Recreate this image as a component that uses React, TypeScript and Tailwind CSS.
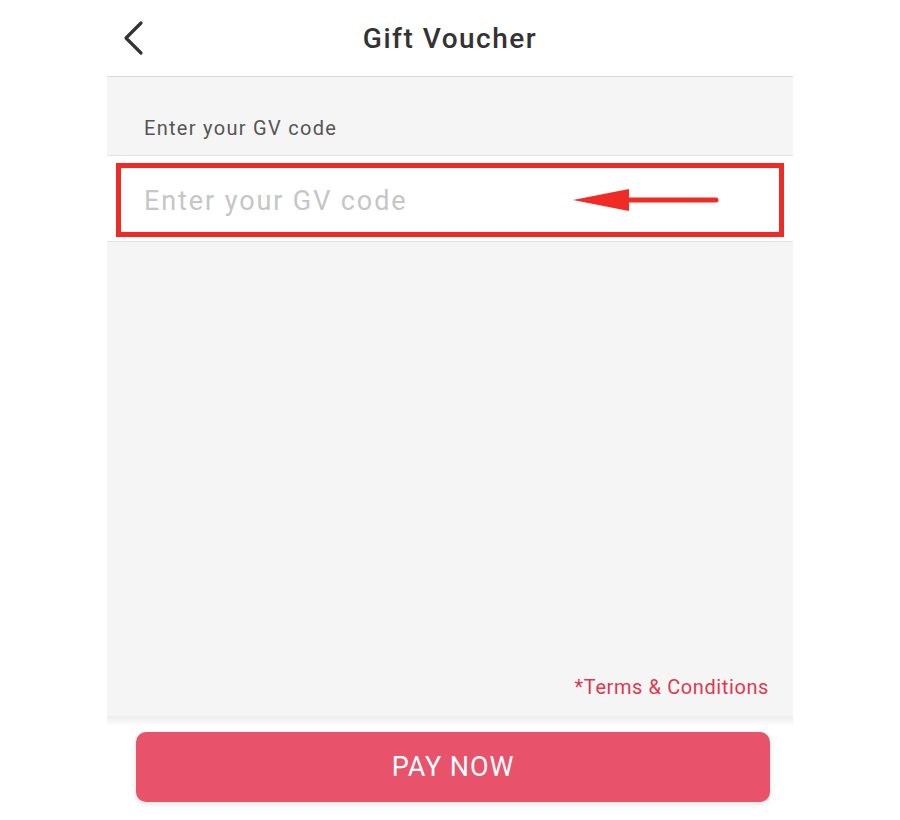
export default function App() {
  return (
    <div className="h-[820px] w-full bg-white font-['Roboto','Liberation_Sans',sans-serif]">
      <div className="mx-auto flex h-full w-[686px] flex-col">
        {/* Header */}
        <div className="relative flex h-[77px] shrink-0 items-center justify-center border-b border-[#dcdcdc] bg-white">
          <button className="absolute left-[14px] top-[20px] p-0" aria-label="back">
            <svg width="26" height="36" viewBox="0 0 26 36" fill="none">
              <path d="M20 3 L5 18 L20 33" stroke="#333" strokeWidth="3.2" strokeLinecap="round" strokeLinejoin="round" />
            </svg>
          </button>
          <h1 className="pt-[2px] text-[28px] font-medium tracking-[1.5px] text-[#333]">Gift Voucher</h1>
        </div>

        {/* Body */}
        <div className="flex flex-1 flex-col bg-[#f5f5f5]">
          <div className="flex h-[79px] items-end border-b border-[#e2e2e2] px-[37px] pb-[12px]">
            <span className="text-[20px] tracking-[1.3px] text-[#555]">Enter your GV code</span>
          </div>
          <div className="h-[86px] border-b border-[#e2e2e2] bg-white px-[9px] pb-[4px] pt-[7px]">
            <div className="relative flex h-full items-center border-[5px] border-[#f02a24] pl-[23px] pt-[2px]">
              <span className="text-[27px] tracking-[1.9px] text-[#c6c6c6]">Enter your GV code</span>
              <svg className="absolute left-[450px] top-[19px]" width="150" height="26" viewBox="0 0 150 26" fill="none">
                <path d="M145 13 L55 13" stroke="#f02a24" strokeWidth="5" strokeLinecap="round" />
                <path d="M2 13 L58 2 L58 24 Z" fill="#f02a24" />
              </svg>
            </div>
          </div>
          <div className="flex flex-1 items-end justify-end px-[24px] pb-[14px]">
            <span className="text-[20px] tracking-[0.6px] text-[#e0384f]">*Terms &amp; Conditions</span>
          </div>
        </div>

        {/* Footer */}
        <div className="relative h-[104px] shrink-0 bg-white pt-[16px]">
          <div className="pointer-events-none absolute inset-x-0 top-0 h-[10px] bg-gradient-to-b from-[#ececec] to-white" />
          <button className="relative ml-[29px] flex h-[70px] w-[634px] items-center justify-center rounded-[10px] bg-[#e8526a] shadow-[0_2px_6px_rgba(0,0,0,0.12)]">
            <span className="text-[27px] tracking-[0.9px] text-white">PAY NOW</span>
          </button>
        </div>
      </div>
    </div>
  );
}
